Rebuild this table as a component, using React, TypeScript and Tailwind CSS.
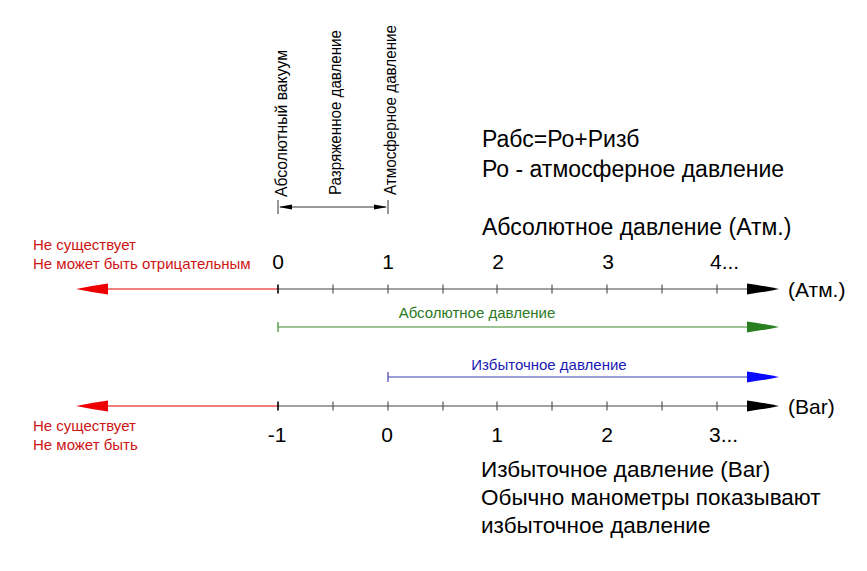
import React from "react";

function ArrowHead({ x, y, dir, color, len = 32, half = 5.5 }: { x: number; y: number; dir: 1 | -1; color: string; len?: number; half?: number }) {
  const b = x - dir * len;
  const m = x - dir * len * 0.45;
  const d = `M ${x} ${y} Q ${m} ${y - half * 0.55} ${b} ${y - half} L ${b} ${y + half} Q ${m} ${y + half * 0.55} ${x} ${y} Z`;
  return <path d={d} fill={color} />;
}

function AxisSvg() {
  const y = 10;
  const ticks = [278, 333, 388, 443, 497, 552, 607, 662, 717];
  return (
    <svg width={788} height={20} viewBox="0 0 788 20" className="block shrink-0 overflow-visible">
      <line x1={108} y1={y} x2={278} y2={y} stroke="#e00000" strokeWidth={1} />
      <ArrowHead x={76} y={y} dir={-1} color="#ee0000" />
      <line x1={278} y1={y} x2={748} y2={y} stroke="#444" strokeWidth={1.2} />
      {ticks.map((x, i) => (
        <line key={x} x1={x} y1={y - 4.5} x2={x} y2={y + 4.5} stroke={i === 0 ? "#000" : "#555"} strokeWidth={i === 0 ? 1.6 : 1.2} />
      ))}
      <ArrowHead x={779} y={y} dir={1} color="#000" />
    </svg>
  );
}

function RangeSvg({ from, line, head }: { from: number; line: string; head: string }) {
  return (
    <svg width={788} height={14} viewBox="0 0 788 14" className="block overflow-visible">
      <line x1={from} y1={2} x2={from} y2={12} stroke={line} strokeWidth={1.2} />
      <line x1={from} y1={7} x2={748} y2={7} stroke={line} strokeWidth={1.2} />
      <ArrowHead x={779} y={7} dir={1} color={head} />
    </svg>
  );
}

function ScaleRow({ labels, last }: { labels: string[]; last: string }) {
  return (
    <div className="flex text-[21px] leading-[21px]">
      {labels.map((l) => (
        <div key={l} className="w-[110px] text-center">{l}</div>
      ))}
      <div className="pl-[47px]">{last}</div>
    </div>
  );
}

export default function App() {
  return (
    <div className="w-[867px] h-[571px] bg-white overflow-hidden font-['Liberation_Sans',Arial,sans-serif] text-black flex flex-col whitespace-nowrap">
      {/* row 1: vertical labels + formula */}
      <div className="flex h-[216px] shrink-0">
        <svg width={410} height={216} viewBox="0 0 410 216" className="block shrink-0">
          <text transform="translate(287,197) rotate(-90)" fontSize={16} textLength={147} lengthAdjust="spacingAndGlyphs" fill="#000">Абсолютный вакуум</text>
          <text transform="translate(341,195) rotate(-90)" fontSize={16} textLength={165} lengthAdjust="spacingAndGlyphs" fill="#000">Разряженное давление</text>
          <text transform="translate(396,195) rotate(-90)" fontSize={16} textLength={170} lengthAdjust="spacingAndGlyphs" fill="#000">Атмосферное давление</text>
          <line x1={278} y1={200} x2={278} y2={214} stroke="#333" strokeWidth={1} />
          <line x1={388} y1={200} x2={388} y2={214} stroke="#333" strokeWidth={1} />
          <line x1={280} y1={207} x2={386} y2={207} stroke="#333" strokeWidth={1} />
          <ArrowHead x={279} y={207} dir={-1} color="#000" len={13} half={2.5} />
          <ArrowHead x={387} y={207} dir={1} color="#000" len={13} half={2.5} />
        </svg>
        <div className="ml-[72px] pt-[124px] text-[23px] leading-[30px] flex flex-col">
          <div>Рабс=Ро+Ризб</div>
          <div>Ро - атмосферное давление</div>
        </div>
      </div>

      {/* row 2: absolute pressure title */}
      <div className="h-[19px] shrink-0 pl-[482px] text-[23px] leading-[23px]">Абсолютное давление (Атм.)</div>

      {/* row 3: red note + top scale */}
      <div className="flex h-[44px] shrink-0">
        <div className="w-[223px] shrink-0 pl-[33px] text-[15px] leading-[19px] text-[#cc1414] flex flex-col">
          <div>Не существует</div>
          <div>Не может быть отрицательным</div>
        </div>
        <div className="pt-[16px]">
          <ScaleRow labels={["0", "1", "2", "3"]} last="4..." />
        </div>
      </div>

      {/* row 4: top axis */}
      <div className="flex h-[20px] shrink-0">
        <AxisSvg />
        <div className="text-[21px] leading-[21px]">(Атм.)</div>
      </div>

      {/* row 5: absolute pressure range (green) */}
      <div className="flex flex-col pt-[6px] shrink-0">
        <div className="ml-[278px] w-[398px] text-center text-[15px] leading-[15px] text-[#2b7a1f]">Абсолютное давление</div>
        <RangeSvg from={278} line="#3a8a2a" head="#2a8020" />
      </div>

      {/* row 6: gauge pressure range (blue) */}
      <div className="flex flex-col pt-[23px] shrink-0">
        <div className="ml-[388px] w-[322px] text-center text-[15px] leading-[15px] text-[#1a1ab4]">Избыточное давление</div>
        <div className="-mt-[2px]">
          <RangeSvg from={388} line="#4040b0" head="#0a0aff" />
        </div>
      </div>

      {/* row 7: bottom axis */}
      <div className="flex h-[20px] shrink-0 mt-[12px]">
        <AxisSvg />
        <div className="text-[21px] leading-[21px]">(Bar)</div>
      </div>

      {/* row 8: red note + bottom scale */}
      <div className="flex h-[40px] shrink-0">
        <div className="w-[223px] shrink-0 pl-[33px] text-[15px] leading-[19px] text-[#cc1414] flex flex-col">
          <div>Не существует</div>
          <div>Не может быть</div>
        </div>
        <div className="pt-[8px] -ml-[1px]">
          <ScaleRow labels={["-1", "0", "1", "2"]} last="3..." />
        </div>
      </div>

      {/* row 9: explanation */}
      <div className="pl-[481px] text-[22.5px] leading-[28px] flex flex-col">
        <div>Избыточное давление (Bar)</div>
        <div>Обычно манометры показывают</div>
        <div>избыточное давление</div>
      </div>
    </div>
  );
}
